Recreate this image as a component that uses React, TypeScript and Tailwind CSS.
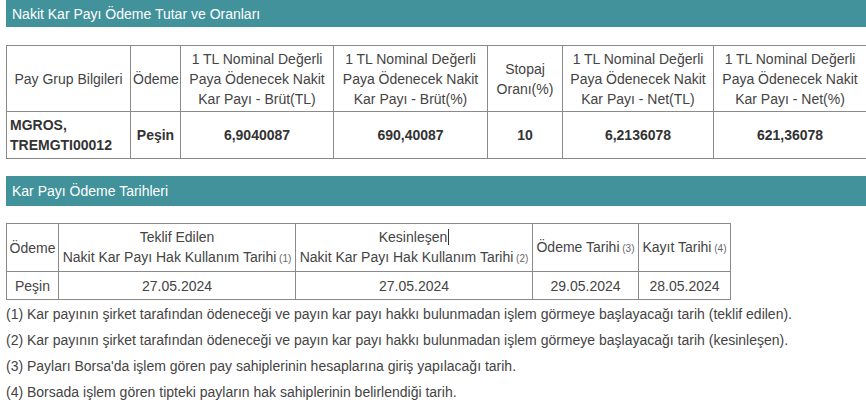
const FONT = { fontFamily: '"Liberation Sans", Arial, sans-serif' }

const payHeaders = [
  'Pay Grup Bilgileri',
  'Ödeme',
  '1 TL Nominal Değerli Paya Ödenecek Nakit Kar Payı - Brüt(TL)',
  '1 TL Nominal Değerli Paya Ödenecek Nakit Kar Payı - Brüt(%)',
  'Stopaj Oranı(%)',
  '1 TL Nominal Değerli Paya Ödenecek Nakit Kar Payı - Net(TL)',
  '1 TL Nominal Değerli Paya Ödenecek Nakit Kar Payı - Net(%)',
]

const payWidths = [124, 50, 153, 154, 75, 151, 153]

const notes = [
  '(1) Kar payının şirket tarafından ödeneceği ve payın kar payı hakkı bulunmadan işlem görmeye başlayacağı tarih (teklif edilen).',
  '(2) Kar payının şirket tarafından ödeneceği ve payın kar payı hakkı bulunmadan işlem görmeye başlayacağı tarih (kesinleşen).',
  "(3) Payları Borsa'da işlem gören pay sahiplerinin hesaplarına giriş yapılacağı tarih.",
  '(4) Borsada işlem gören tipteki payların hak sahiplerinin belirlendiği tarih.',
]

function SectionBar({ title, tall }: { title: string; tall?: boolean }) {
  return (
    <div
      className={`ml-[6px] flex items-center bg-[#41929a] pl-[6px] text-[14px] text-white ${tall ? 'h-[30px]' : 'h-[27px]'}`}
    >
      {title}
    </div>
  )
}

function Ref({ n }: { n: number }) {
  return <span className="text-[10px] text-[#666]"> ({n})</span>
}

export default function App() {
  return (
    <div className="h-[412px] w-[866px] overflow-hidden bg-white text-[14px] leading-[20px] text-[#333]" style={FONT}>
      <SectionBar title="Nakit Kar Payı Ödeme Tutar ve Oranları" />

      {/* tutar ve oranlar */}
      <div className="ml-[6px] mt-[18px]">
        <table className="w-[860px] table-fixed border-collapse">
          <colgroup>
            {payWidths.map((w, i) => (
              <col key={i} style={{ width: w }} />
            ))}
          </colgroup>
          <thead>
            <tr className="h-[66px]">
              {payHeaders.map((h) => (
                <th key={h} className="border border-[#8a8a8a] px-[2px] text-center font-normal text-[#444]">
                  {h}
                </th>
              ))}
            </tr>
          </thead>
          <tbody>
            <tr className="h-[47px] font-bold">
              <td className="border border-[#8a8a8a] px-[3px] text-left">
                MGROS,
                <br />
                TREMGTI00012
              </td>
              <td className="border border-[#8a8a8a] text-center">Peşin</td>
              <td className="border border-[#8a8a8a] text-center">6,9040087</td>
              <td className="border border-[#8a8a8a] text-center">690,40087</td>
              <td className="border border-[#8a8a8a] text-center">10</td>
              <td className="border border-[#8a8a8a] text-center">6,2136078</td>
              <td className="border border-[#8a8a8a] text-center">621,36078</td>
            </tr>
          </tbody>
        </table>
      </div>

      <div className="mt-[17px]">
        <SectionBar title="Kar Payı Ödeme Tarihleri" tall />
      </div>

      {/* tarihler */}
      <div className="ml-[6px] mt-[17px]">
        <table className="w-[724px] table-fixed border-collapse text-[#444]">
          <colgroup>
            <col style={{ width: 52 }} />
            <col style={{ width: 237 }} />
            <col style={{ width: 237 }} />
            <col style={{ width: 106 }} />
            <col style={{ width: 92 }} />
          </colgroup>
          <thead>
            <tr className="h-[48px]">
              <th className="border border-[#8a8a8a] text-center font-normal">Ödeme</th>
              <th className="border border-[#8a8a8a] text-center font-normal">
                Teklif Edilen
                <br />
                Nakit Kar Payı Hak Kullanım Tarihi
                <Ref n={1} />
              </th>
              <th className="border border-[#8a8a8a] text-center font-normal">
                Kesinleşen
                <span className="ml-px inline-block h-[16px] w-px bg-[#333] align-[-3px]" />
                <br />
                Nakit Kar Payı Hak Kullanım Tarihi
                <Ref n={2} />
              </th>
              <th className="border border-[#8a8a8a] text-center font-normal">
                Ödeme Tarihi
                <Ref n={3} />
              </th>
              <th className="border border-[#8a8a8a] text-center font-normal">
                Kayıt Tarihi
                <Ref n={4} />
              </th>
            </tr>
          </thead>
          <tbody>
            <tr className="h-[28px]">
              <td className="border border-[#8a8a8a] text-center">Peşin</td>
              <td className="border border-[#8a8a8a] text-center">27.05.2024</td>
              <td className="border border-[#8a8a8a] text-center">27.05.2024</td>
              <td className="border border-[#8a8a8a] text-center">29.05.2024</td>
              <td className="border border-[#8a8a8a] text-center">28.05.2024</td>
            </tr>
          </tbody>
        </table>
      </div>

      <div className="ml-[6px] mt-[1px] text-[#444]">
        {notes.map((n) => (
          <div key={n} className="leading-[26px]">
            {n}
          </div>
        ))}
      </div>
    </div>
  )
}
